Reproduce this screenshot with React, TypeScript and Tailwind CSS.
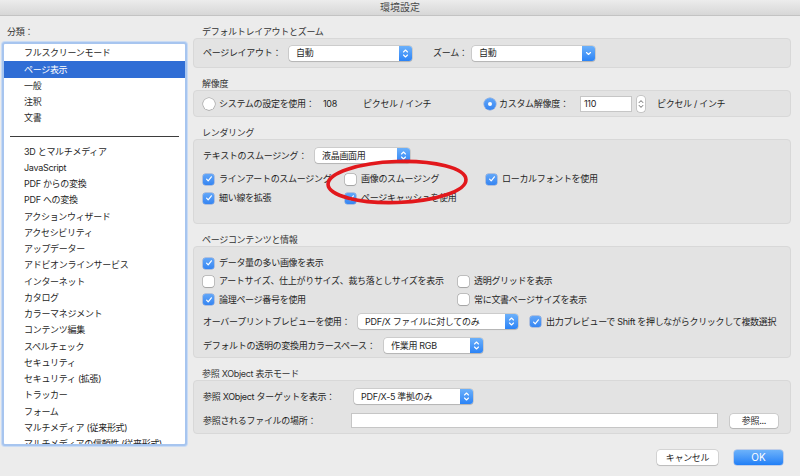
import React from "react";

const UpDown = ({ color = "white" }: { color?: string }) => (
  <svg width="7" height="11" viewBox="0 0 7 11">
    <path
      d="M1.5 4 L3.5 2 L5.5 4 M1.5 7 L3.5 9 L5.5 7"
      stroke={color}
      strokeWidth="1.1"
      fill="none"
      strokeLinecap="round"
      strokeLinejoin="round"
    />
  </svg>
);

const Down = () => (
  <svg width="7" height="11" viewBox="0 0 7 11">
    <path d="M1.5 4.5 L3.5 6.5 L5.5 4.5" stroke="white" strokeWidth="1.1" fill="none" strokeLinecap="round" strokeLinejoin="round" />
  </svg>
);

function Sel({ w, text, kind = "updown" }: { w: string; text: React.ReactNode; kind?: "updown" | "down" }) {
  return (
    <div className={"flex h-[15px] shrink-0 items-stretch rounded-[3px] bg-white shadow-[0_0_0_0.5px_rgba(0,0,0,0.2),0_1px_1px_rgba(0,0,0,0.12)] " + w}>
      <div className="flex flex-1 items-center pl-[7px] whitespace-nowrap overflow-hidden">{text}</div>
      <div className="flex w-[13px] items-center justify-center rounded-r-[3px] bg-gradient-to-b from-[#6bb0fa] to-[#2a83f6]">
        {kind === "updown" ? <UpDown /> : <Down />}
      </div>
    </div>
  );
}

function Chk({ checked, label, w = "" }: { checked?: boolean; label: string; w?: string }) {
  return (
    <div className={"flex items-center whitespace-nowrap shrink-0 " + w}>
      {checked ? (
        <div className="flex h-[11px] w-[11px] items-center justify-center rounded-[2.5px] bg-gradient-to-b from-[#62a6f8] to-[#3585f2] shadow-[0_0_0_0.5px_rgba(30,90,200,0.5)]">
          <svg width="8" height="8" viewBox="0 0 8 8">
            <path d="M1.6 4.2 L3.2 5.9 L6.4 1.8" stroke="white" strokeWidth="1.2" fill="none" strokeLinecap="round" strokeLinejoin="round" />
          </svg>
        </div>
      ) : (
        <div className="h-[11px] w-[11px] rounded-[2.5px] bg-white shadow-[0_0_0_0.5px_rgba(0,0,0,0.3),0_0.5px_1px_rgba(0,0,0,0.15)]" />
      )}
      <span className="ml-[5px]">{label}</span>
    </div>
  );
}

function Radio({ on }: { on?: boolean }) {
  return on ? (
    <div className="flex h-[12px] w-[12px] shrink-0 items-center justify-center rounded-full bg-gradient-to-b from-[#62a6f8] to-[#3585f2] shadow-[0_0_0_0.5px_rgba(30,90,200,0.5)]">
      <div className="h-[4px] w-[4px] rounded-full bg-white" />
    </div>
  ) : (
    <div className="h-[12px] w-[12px] shrink-0 rounded-full bg-white shadow-[0_0_0_0.5px_rgba(0,0,0,0.32),0_0.5px_1px_rgba(0,0,0,0.15)]" />
  );
}

function Section({ title, box, children }: { title: string; box: string; children: React.ReactNode }) {
  return (
    <div className="mt-[9px]">
      <div className="h-[13px] pl-[9px] leading-[13px] text-[#333]">{title}</div>
      <div className={"relative rounded-[4px] border border-[#d8d8d8] bg-[#e3e3e3] px-[9px] " + box}>{children}</div>
    </div>
  );
}

const topItems = ["フルスクリーンモード", "ページ表示", "一般", "注釈", "文書"];
const bottomItems = [
  "3D とマルチメディア",
  "JavaScript",
  "PDF からの変換",
  "PDF への変換",
  "アクションウィザード",
  "アクセシビリティ",
  "アップデーター",
  "アドビオンラインサービス",
  "インターネット",
  "カタログ",
  "カラーマネジメント",
  "コンテンツ編集",
  "スペルチェック",
  "セキュリティ",
  "セキュリティ (拡張)",
  "トラッカー",
  "フォーム",
  "マルチメディア (従来形式)",
  "マルチメディアの信頼性 (従来形式)",
];

export default function App() {
  return (
    <div className="flex h-[476px] w-[800px] flex-col overflow-hidden bg-[#ececec] font-['Inter','Noto_Sans_CJK_JP',sans-serif] text-[9px] tracking-[-0.3px] text-[#1f1f1f]">
      <div className="flex h-[16px] shrink-0 items-center justify-center border-b border-[#c3c3c3] bg-gradient-to-b from-[#ececec] to-[#d7d7d7] text-[10px] tracking-normal text-[#4a4a4a]">
        環境設定
      </div>
      <div className="flex flex-1">
        {/* sidebar */}
        <div className="w-[193px] shrink-0 pl-[2px]">
          <div className="mt-[10px] h-[12px] pl-[5px] leading-[12px] text-[#333]">分類：</div>
          <div className="mt-[4px] h-[404px] w-[185px] overflow-hidden rounded-[3px] border-2 border-[#a7c5ef] bg-white pt-[1px] shadow-[0_0_0_1px_#c9dbf4]">
            {topItems.map((t, i) => (
              <div
                key={t}
                className={
                  "flex h-[16.25px] items-center pl-[20px] whitespace-nowrap " +
                  (i === 1 ? "bg-[#2f6dd5] text-white" : "")
                }
              >
                {t}
              </div>
            ))}
            <div className="h-[17px] px-[6px] pt-[10px]">
              <div className="h-px bg-[#3d3d3d]" />
            </div>
            {bottomItems.map((t) => (
              <div key={t} className="flex h-[16.25px] items-center pl-[20px] whitespace-nowrap">
                {t}
              </div>
            ))}
          </div>
        </div>

        {/* right */}
        <div className="flex w-[598px] flex-col">
          <Section title="デフォルトレイアウトとズーム" box="flex h-[30px] items-center">
            <span className="w-[86px] shrink-0 whitespace-nowrap">ページレイアウト：</span>
            <Sel w="w-[123px]" text="自動" />
            <span className="ml-[21px] w-[39px] shrink-0 whitespace-nowrap">ズーム：</span>
            <Sel w="w-[123px]" text="自動" kind="down" />
          </Section>

          <Section title="解像度" box="flex h-[27px] items-center">
            <Radio />
            <span className="ml-[4px] w-[104px] shrink-0 whitespace-nowrap">システムの設定を使用：</span>
            <span className="w-[40px] shrink-0">108</span>
            <span className="w-[121px] shrink-0 whitespace-nowrap">ピクセル / インチ</span>
            <Radio on />
            <span className="ml-[3px] w-[81px] shrink-0 whitespace-nowrap">カスタム解像度：</span>
            <div className="flex h-[16px] w-[52px] shrink-0 items-center border border-[#c6c6c6] bg-white pl-[3px]">110</div>
            <div className="ml-[5px] flex h-[16px] w-[8px] shrink-0 items-center justify-center rounded-[3px] bg-white shadow-[0_0_0_0.5px_rgba(0,0,0,0.25)]">
              <svg width="6" height="12" viewBox="0 0 6 12">
                <path d="M1.2 4.5 L3 2.6 L4.8 4.5 M1.2 7.5 L3 9.4 L4.8 7.5" stroke="#555" strokeWidth="0.9" fill="none" strokeLinecap="round" strokeLinejoin="round" />
              </svg>
            </div>
            <span className="ml-[12px] whitespace-nowrap">ピクセル / インチ</span>
          </Section>

          <Section title="レンダリング" box="h-[85px] pt-[8px]">
            <div className="flex h-[15px] items-center">
              <span className="w-[112px] shrink-0 whitespace-nowrap">テキストのスムージング：</span>
              <Sel w="w-[95px]" text="液晶画面用" />
            </div>
            <div className="mt-[10px] flex h-[12px] items-center">
              <Chk checked w="w-[142px]" label="ラインアートのスムージング" />
              <Chk w="w-[141px]" label="画像のスムージング" />
              <Chk checked label="ローカルフォントを使用" />
            </div>
            <div className="mt-[7px] flex h-[12px] items-center">
              <Chk checked w="w-[142px]" label="細い線を拡張" />
              <Chk checked label="ページキャッシュを使用" />
            </div>
            <svg className="pointer-events-none absolute left-[129px] top-[18px]" width="150" height="50" viewBox="0 0 150 50">
              <ellipse cx="74" cy="24" rx="69" ry="20.5" fill="none" stroke="#e2181c" strokeWidth="3.6" transform="rotate(-2 74 24)" />
            </svg>
          </Section>

          <Section title="ページコンテンツと情報" box="h-[112px] pt-[10px]">
            <div className="flex h-[12px] items-center">
              <Chk checked label="データ量の多い画像を表示" />
            </div>
            <div className="mt-[6px] flex h-[12px] items-center">
              <Chk w="w-[255px]" label="アートサイズ、仕上がりサイズ、裁ち落としサイズを表示" />
              <Chk label="透明グリッドを表示" />
            </div>
            <div className="mt-[6.5px] flex h-[12px] items-center">
              <Chk checked w="w-[255px]" label="論理ページ番号を使用" />
              <Chk label="常に文書ページサイズを表示" />
            </div>
            <div className="mt-[8.5px] flex h-[15px] items-center">
              <span className="w-[155px] shrink-0 whitespace-nowrap">オーバープリントプレビューを使用：</span>
              <Sel w="w-[160px]" text="PDF/X ファイルに対してのみ" />
              <div className="ml-[12px]">
                <Chk checked label="出力プレビューで Shift を押しながらクリックして複数選択" />
              </div>
            </div>
            <div className="mt-[9px] flex h-[15px] items-center">
              <span className="w-[181px] shrink-0 whitespace-nowrap">デフォルトの透明の変換用カラースペース：</span>
              <Sel w="w-[99px]" text="作業用 RGB" />
            </div>
          </Section>

          <Section title="参照 XObject 表示モード" box="h-[54px] pt-[8px]">
            <div className="flex h-[15px] items-center">
              <span className="w-[151px] shrink-0 whitespace-nowrap">参照 XObject ターゲットを表示：</span>
              <Sel w="w-[119px]" text="PDF/X-5 準拠のみ" />
            </div>
            <div className="mt-[9px] flex h-[15px] items-center">
              <span className="w-[148px] shrink-0 whitespace-nowrap">参照されるファイルの場所：</span>
              <div className="h-[15px] w-[367px] shrink-0 border border-[#c6c6c6] bg-white" />
              <div className="ml-[12px] flex h-[14px] w-[48px] shrink-0 items-center justify-center rounded-[3px] bg-white shadow-[0_0_0_0.5px_rgba(0,0,0,0.2),0_1px_1px_rgba(0,0,0,0.12)]">
                参照...
              </div>
            </div>
          </Section>

          <div className="mt-[16px] flex justify-end gap-[16px] pr-[8px]">
            <div className="flex h-[15px] w-[61px] items-center justify-center rounded-[3px] bg-white shadow-[0_0_0_0.5px_rgba(0,0,0,0.2),0_1px_1px_rgba(0,0,0,0.12)]">
              キャンセル
            </div>
            <div className="flex h-[15px] w-[49px] items-center justify-center rounded-[3px] bg-gradient-to-b from-[#6cb2fa] to-[#1f7ff6] text-[10px] tracking-normal text-white shadow-[0_0_0_0.5px_rgba(20,90,220,0.4)]">
              OK
            </div>
          </div>
        </div>
      </div>
    </div>
  );
}
